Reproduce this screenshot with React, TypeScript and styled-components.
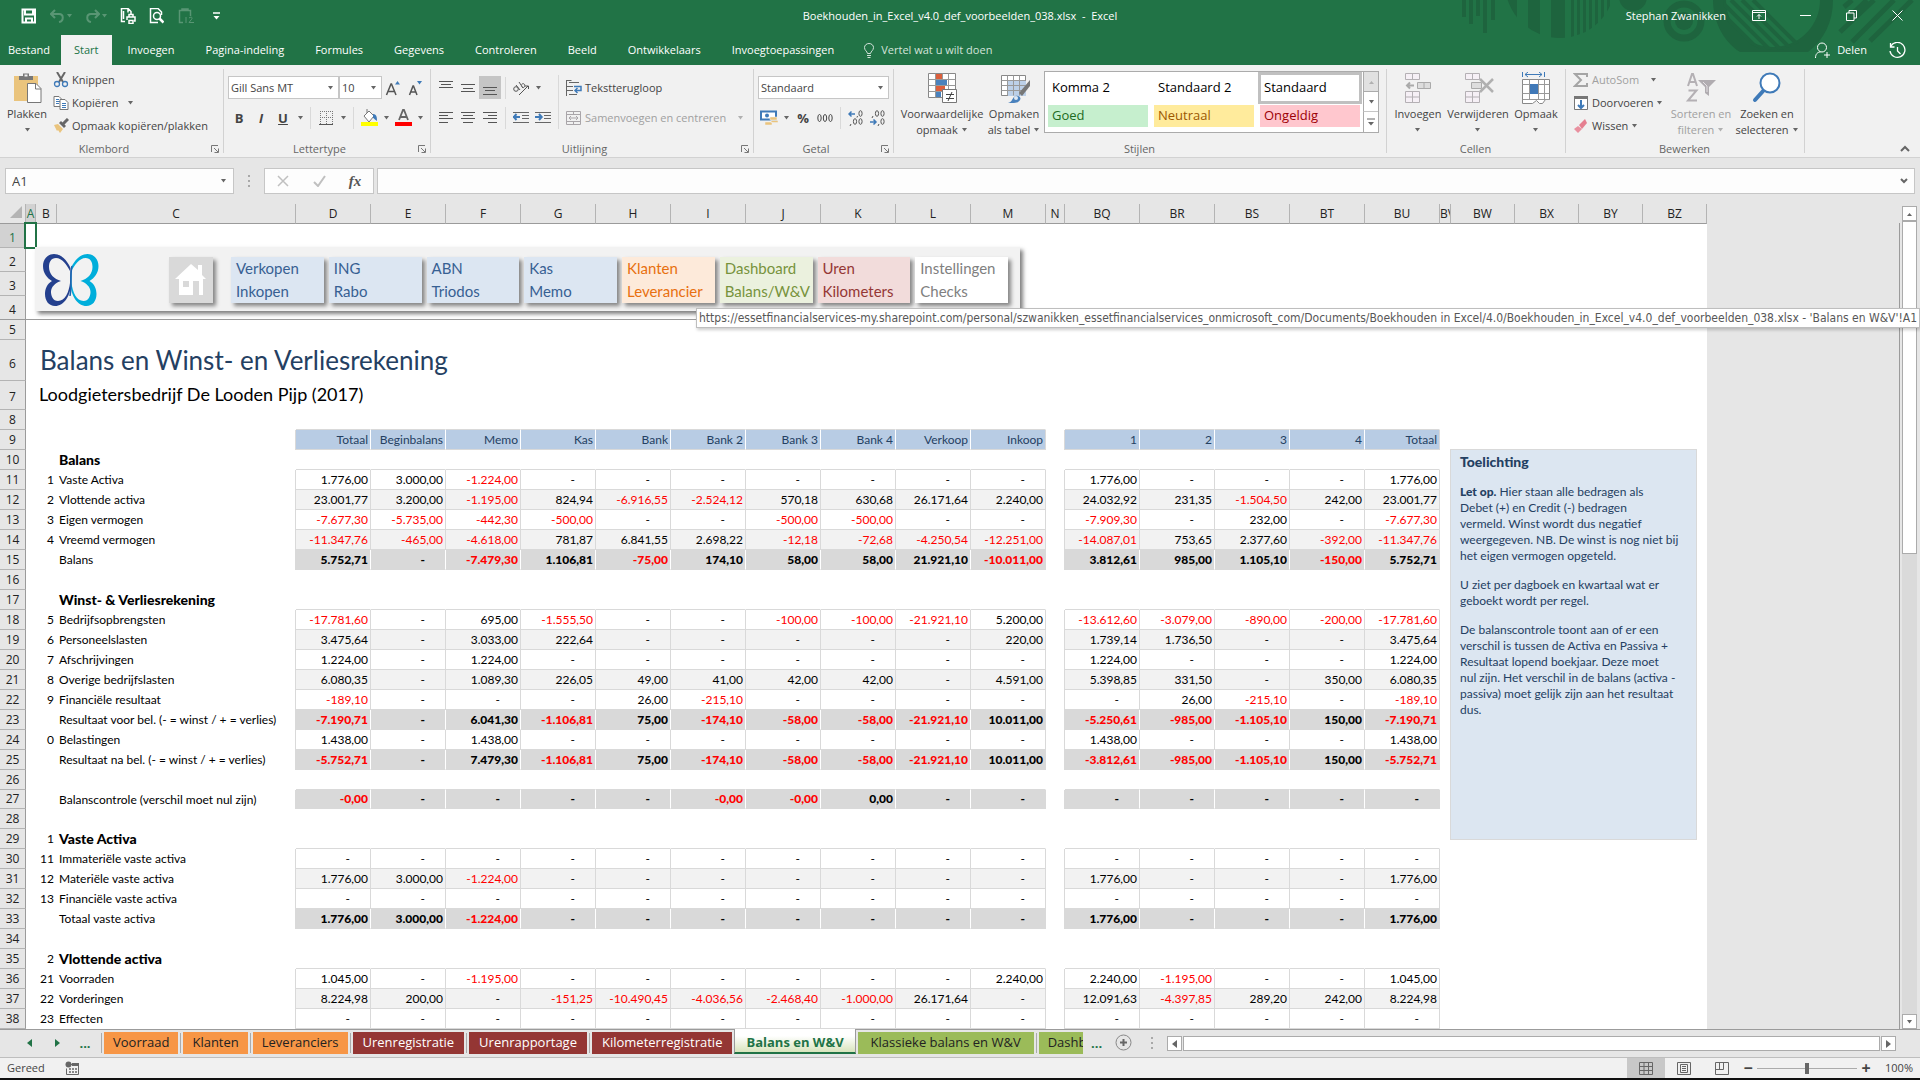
import React, { Fragment, ReactNode } from "react";
import styled, { createGlobalStyle, css } from "styled-components";

const ui = `"Open Sans", "Noto Sans", sans-serif`;
const gill = `Lato, "Open Sans", sans-serif`;
const green = "#217346";
const line = "#d9d9d9";

const Global = createGlobalStyle`
  * { box-sizing: border-box; }
  html, body { margin: 0; height: 100%; }
  body { font: 11px/16px ${ui}; color: #444; background: #e6e6e6; overflow: hidden; }
  button, input, select { font: inherit; color: inherit; }
  button { border: 0; padding: 0; background: none; cursor: default; }
  svg { display: block; flex: none; }
`;

const Window = styled.div`
  display: flex;
  flex-direction: column;
  height: 100vh;
  min-width: 0;
`;

/* ---------- Title bar ---------- */

const Header = styled.header`
  position: relative;
  background: ${green};
  color: #fff;
`;
const Pattern = styled.svg`
  position: absolute;
  top: 0;
  right: 0;
`;
const TitleBar = styled.div`
  position: relative;
  display: grid;
  grid-template-columns: 1fr auto 1fr;
  align-items: center;
  height: 35px;
  padding-bottom: 4px;
`;
const QuickAccess = styled.div`
  display: flex;
  align-items: center;
  padding-left: 15px;
`;
const QuickButton = styled.button<{ $dim?: boolean }>`
  display: flex;
  align-items: center;
  justify-content: space-between;
  width: ${(p) => (p.$dim ? 35 : 29)}px;
  height: 24px;
  padding: 0 6px;
  opacity: ${(p) => (p.$dim ? 0.25 : 1)};
`;
const DocTitle = styled.h1`
  margin: 0;
  font: inherit;
  white-space: pre;
`;
const WindowControls = styled.div`
  display: flex;
  align-items: center;
  justify-content: flex-end;
`;
const WindowButton = styled.button`
  display: flex;
  justify-content: center;
  width: 46px;
`;
const UserName = styled.span`
  margin-right: 10px;
`;
const TabRow = styled.nav`
  position: relative;
  display: flex;
  gap: 1px;
  height: 30px;
  padding-right: 14px;
`;
const RibbonTab = styled.button<{ $active?: boolean; $file?: boolean }>`
  padding: 0 ${(p) => (p.$file ? 10 : p.$active ? 13 : 15)}px;
  padding-left: ${(p) => (p.$file ? 8 : p.$active ? 13 : 15)}px;
  background: ${(p) => (p.$active ? "#f1f1f1" : "transparent")};
  color: ${(p) => (p.$active ? green : "#fff")};
`;
const TellMe = styled.button`
  display: flex;
  align-items: center;
  gap: 7px;
  margin-left: 14px;
  color: #d3e3da;
`;
const TabActions = styled.div`
  display: flex;
  align-items: center;
  gap: 22px;
  margin-left: auto;
`;
const TabAction = styled.button`
  display: flex;
  align-items: center;
  gap: 7px;
`;

/* ---------- Ribbon ---------- */

const Ribbon = styled.section`
  display: flex;
  height: 93px;
  background: #f1f1f1;
  border-bottom: 1px solid #d2d2d2;
`;
const Group = styled.div<{ $w: number }>`
  display: flex;
  flex-direction: column;
  flex: none;
  width: ${(p) => p.$w}px;
  margin: 4px 0;
  border-right: 1px solid #d2d2d2;
`;
const GroupBody = styled.div`
  display: flex;
  flex: 1;
  padding-left: 4px;
`;
const GroupFoot = styled.div`
  display: flex;
  align-items: center;
  height: 16px;
  margin-bottom: -4px;
  padding-right: 1px;
  color: #666;
`;
const GroupName = styled.span`
  flex: 1;
  text-align: center;
  line-height: 12px;
`;
const Launcher = styled.button`
  width: 14px;
  display: grid;
  place-items: center;
`;
const BigButton = styled.button<{ $w: number; $off?: boolean }>`
  display: flex;
  flex-direction: column;
  align-items: center;
  width: ${(p) => p.$w}px;
  padding-top: 3px;
  gap: 2px;
  white-space: nowrap;
  color: ${(p) => (p.$off ? "#a0a0a0" : "#444")};
`;
const BigText = styled.span`
  display: flex;
  flex-direction: column;
  align-items: center;
  height: 32px;
`;
const BigLine = styled.span`
  display: flex;
  align-items: center;
  gap: 3px;
  height: 16px;
`;
const Stack = styled.div<{ $w?: number }>`
  display: flex;
  flex-direction: column;
  margin-top: -1px;
  width: ${(p) => (p.$w ? p.$w + "px" : "auto")};
`;
const SmallButton = styled.button<{ $off?: boolean; $gap?: number }>`
  display: flex;
  align-items: center;
  gap: 3px;
  height: 23px;
  padding-left: 3px;
  white-space: nowrap;
  color: ${(p) => (p.$off ? "#a0a0a0" : "#444")};
  & > svg:last-child:not(:first-child) { margin-left: ${(p) => p.$gap || 0}px; }
`;
const TwoRows = styled.div`
  display: flex;
  flex-direction: column;
  gap: 7px;
  padding-top: 7px;
`;
const ToolRow = styled.div`
  display: flex;
  align-items: center;
  height: 23px;
`;
const Tool = styled.button<{ $on?: boolean }>`
  display: grid;
  place-items: center;
  width: 22px;
  height: 23px;
  background: ${(p) => (p.$on ? "#c5c5c5" : "transparent")};
  font-size: 13px;
`;
const CaretButton = styled.button`
  display: grid;
  place-items: center;
  width: 12px;
  height: 23px;
`;
const Divider = styled.span<{ $tall?: boolean }>`
  width: 1px;
  height: ${(p) => (p.$tall ? 54 : 22)}px;
  margin: ${(p) => (p.$tall ? "6px" : "0")} 4px 0;
  background: ${line};
`;
const SelectWrap = styled.label<{ $w: number }>`
  display: grid;
  align-items: center;
  width: ${(p) => p.$w}px;
  height: 23px;
  & > * { grid-area: 1 / 1; }
  & > svg { justify-self: end; margin-right: 5px; pointer-events: none; }
`;
const Select = styled.select`
  appearance: none;
  width: 100%;
  height: 23px;
  padding: 0 2px;
  border: 1px solid #c6c6c6;
  border-radius: 0;
  background: #fff;
`;
const Gallery = styled.div`
  display: flex;
  width: 335px;
  height: 62px;
  margin: 2px 0 0 2px;
  border: 1px solid #ababab;
  background: #fff;
`;
const GalleryGrid = styled.div`
  display: grid;
  grid-template-columns: repeat(3, 100px);
  grid-template-rows: 28px 22px;
  gap: 3px 6px;
  flex: 1;
  padding: 2px 3px;
`;
const StyleCell = styled.button<{ $bg?: string; $fg?: string; $sel?: boolean }>`
  padding: 0 0 2px 4px;
  text-align: left;
  font-size: 13px;
  color: ${(p) => p.$fg || "#000"};
  background: ${(p) => p.$bg || "#fff"};
  ${(p) => p.$sel && css`
    outline: 3px solid #c0c0c0;
    outline-offset: -1px;
  `}
`;
const GalleryScroll = styled.div`
  display: grid;
  grid-template-rows: repeat(3, 1fr);
  width: 15px;
`;
const ScrollStep = styled.button<{ $off?: boolean }>`
  display: grid;
  place-items: center;
  border-left: 1px solid #ababab;
  border-bottom: 1px solid ${(p) => (p.$off ? "#ababab" : "#c6c6c6")};
  background: ${(p) => (p.$off ? "#e1e1e1" : "#fff")};
  &:last-child { border-bottom: 0; }
`;
const RibbonEnd = styled.div`
  display: flex;
  flex: 1;
  align-items: flex-end;
  justify-content: flex-end;
  padding: 0 10px 5px;
`;

/* ---------- Formula bar ---------- */

const FormulaBar = styled.div`
  display: flex;
  align-items: center;
  height: 46px;
  padding: 0 5px;
`;
const Box = styled.div<{ $w?: number }>`
  display: flex;
  align-items: center;
  flex: ${(p) => (p.$w ? "none" : 1)};
  width: ${(p) => (p.$w ? p.$w + "px" : "auto")};
  height: 26px;
  border: 1px solid #c6c6c6;
  background: #fdfdfd;
  padding-right: 6px;
`;
const BoxInput = styled.input`
  flex: 1;
  min-width: 0;
  border: 0;
  padding: 0 6px;
  font-size: 13px;
  background: transparent;
`;
const Grip = styled.span`
  width: 30px;
  height: 25px;
  display: grid;
  justify-items: center;
  align-content: center;
  gap: 3px;
  & > i { width: 2px; height: 2px; background: #a8a8a8; }
`;
const FxButtons = styled.div`
  display: flex;
  width: 110px;
  height: 26px;
  margin-right: 3px;
  border: 1px solid #c6c6c6;
  background: #fdfdfd;
`;
const FxButton = styled.button`
  display: grid;
  place-items: center;
  flex: 1;
  font: italic bold 15px/20px "Liberation Serif", serif;
  color: #555;
`;

/* ---------- Sheet ---------- */

const Workspace = styled.main`
  position: relative;
  display: flex;
  flex: 1;
  min-height: 0;
`;
const Pane = styled.div`
  position: relative;
  flex: 1;
  min-width: 0;
  overflow: hidden;
`;
const Grid = styled.table`
  table-layout: fixed;
  width: 1707px;
  border-collapse: separate;
  border-spacing: 0;
  font: 12px/16px ${gill};
  color: #000;
  background: #fff;
`;
const ColHead = styled.th<{ $sel?: boolean }>`
  height: 20px;
  padding: 0;
  overflow: hidden;
  font: 12px/16px ${ui};
  color: ${(p) => (p.$sel ? green : "#222")};
  background: ${(p) => (p.$sel ? "#d2d2d2" : "#e6e6e6")};
  border-right: 1px solid #b4b4b4;
  border-bottom: 1px solid #9b9b9b;
`;
const Corner = styled.th`
  padding: 0 3px 3px 0;
  background: #e6e6e6;
  border-bottom: 1px solid #9b9b9b;
  border-right: 1px solid #b4b4b4;
  & > svg { margin-left: auto; }
`;
const Row = styled.tr<{ $h: number }>`
  height: ${(p) => p.$h}px;
`;
const RowHead = styled.th<{ $sel?: boolean; $frozen?: boolean; $drop?: number }>`
  padding: ${(p) => p.$drop || 0}px 0 0;
  font: 12px/16px ${ui};
  color: ${(p) => (p.$sel ? green : "#222")};
  background: ${(p) => (p.$sel ? "#d2d2d2" : "#e6e6e6")};
  border-right: 1px solid #9b9b9b;
  border-bottom: 1px solid ${(p) => (p.$frozen ? "#9b9b9b" : "#b4b4b4")};
`;
type Kind = "plain" | "alt" | "total" | "head" | "above" | "blank";
const fills: Record<Kind, string> = {
  plain: "#fff", alt: "#f2f2f2", total: "#d9d9d9", head: "#b8cce4", above: "#fff", blank: "#fff",
};
const Cell = styled.td<{ $kind: Kind; $last?: boolean; $dash?: boolean; $neg?: boolean }>`
  padding: 0 ${(p) => (p.$dash ? 20 : 2)}px 0 0;
  text-align: right;
  white-space: nowrap;
  background: ${(p) => fills[p.$kind]};
  color: ${(p) => (p.$neg ? "#f00" : p.$kind === "head" ? "#244062" : "#000")};
  font-weight: ${(p) => (p.$kind === "total" ? 900 : 400)};
  border-bottom: 1px solid ${(p) => (p.$kind === "blank" ? "#fff" : line)};
  border-right: 1px solid ${(p) =>
    p.$kind === "blank" || p.$kind === "above" ? "#fff"
      : p.$last || p.$kind === "plain" || p.$kind === "alt" ? line : "#fff"};
`;
const Label = styled.td<{ $bold?: boolean; $edge?: boolean }>`
  padding: 0 0 0 2px;
  white-space: nowrap;
  font-weight: ${(p) => (p.$bold ? 900 : 400)};
  font-size: ${(p) => (p.$bold ? 14 : 12)}px;
  border-right: 1px solid ${(p) => (p.$edge ? line : "transparent")};
`;
const Code = styled.td`
  padding: 0 3px 0 0;
  text-align: right;
`;
const Spacer = styled.td<{ $edge?: boolean; $frozen?: boolean }>`
  padding: 0;
  border-right: 1px solid ${(p) => (p.$edge ? line : "transparent")};
  border-bottom: ${(p) => (p.$frozen ? "1px solid #9b9b9b" : "0")};
`;
const Selected = styled.td`
  position: relative;
  padding: 0;
  &::after {
    content: "";
    position: absolute;
    inset: -2px -1px -1px -2px;
    border: 2px solid ${green};
  }
`;
const Heading = styled.td`
  padding: 0 0 0 4px;
  font-size: 26px;
  line-height: 40px;
  vertical-align: top;
  color: #244062;
`;
const SubHeading = styled.td`
  padding: 0 0 0 3px;
  font-size: 18px;
  line-height: 26px;
  vertical-align: top;
`;

const NavPanel = styled.nav`
  position: absolute;
  left: 35px;
  top: 43px;
  display: flex;
  width: 985px;
  height: 64px;
  padding: 7px 12px 8px 8px;
  background: #f2f2f2;
  box-shadow: 3px 3px 4px rgba(0, 0, 0, 0.5);
`;
const HomeLink = styled.a`
  display: grid;
  place-items: center;
  width: 44px;
  height: 46px;
  margin: 3px 18px 0 70px;
  background: ${line};
  box-shadow: 3px 3px 4px rgba(0, 0, 0, 0.45);
`;
const NavCards = styled.div`
  display: flex;
  flex: 1;
  gap: 5px;
  margin-top: 3px;
`;
const NavCard = styled.div<{ $bg: string; $fg: string }>`
  display: flex;
  flex: 1 1 0;
  min-width: 0;
  flex-direction: column;
  height: 46px;
  background: ${(p) => p.$bg};
  box-shadow: 3px 3px 4px rgba(0, 0, 0, 0.45);
  & > a {
    padding-left: 5px;
    font: 15px/23px ${gill};
    color: ${(p) => p.$fg};
    text-decoration: none;
  }
`;
const Note = styled.aside`
  position: absolute;
  left: 1450px;
  top: 245px;
  width: 247px;
  height: 391px;
  padding: 4px 9px;
  border: 1px solid ${line};
  background: #dce6f1;
  color: #244062;
  font: 12px/16px ${gill};
  white-space: nowrap;
  & > h2 { margin: 0; font: 900 14px/16px ${gill}; }
  & > p { margin: 14px 0 0; }
  & > p + p { margin-top: 13px; }
  & b { font-weight: 900; }
`;
const Tooltip = styled.div`
  position: absolute;
  right: 0;
  top: 104px;
  height: 20px;
  padding: 0 2px;
  border: 1px solid #bebebe;
  background: #fff;
  color: #575757;
  font: 12px/18px "DejaVu Sans Condensed", "DejaVu Sans", sans-serif;
  white-space: nowrap;
  box-shadow: 1px 2px 3px rgba(0, 0, 0, 0.2);
`;
const VScroll = styled.div`
  display: flex;
  flex-direction: column;
  align-items: flex-start;
  width: 21px;
  padding-top: 2px;
  padding-left: 3px;
`;
const PaneEdge = styled.div`
  width: 1px;
  margin-top: 19px;
  margin-right: -1px;
  background: #9b9b9b;
`;
const Arrow = styled.button`
  display: grid;
  place-items: center;
  flex: none;
  width: 15px;
  height: 15px;
  border: 1px solid #ababab;
  background: #fff;
`;
const VTrack = styled.div`
  flex: 1;
  width: 15px;
  background: #dadada;
`;
const VThumb = styled.div`
  height: 42%;
  border: 1px solid #ababab;
  background: #fff;
`;

/* ---------- Sheet tabs ---------- */

const SheetBar = styled.div`
  display: flex;
  align-items: flex-start;
  height: 28px;
  padding: 0 24px 0 15px;
  border-top: 1px solid #9b9b9b;
  font-size: 13px;
`;
const SheetNav = styled.button`
  display: grid;
  place-items: center;
  width: 28px;
  height: 25px;
  font-weight: 700;
  color: ${green};
`;
const SheetTabs = styled.div`
  display: flex;
  min-width: 0;
`;
const TabRule = styled.i`
  width: 1px;
  height: 20px;
  margin: 3px 2px 0;
  background: #ababab;
`;
const SheetTab = styled.button<{ $bg: string; $fg: string; $pad: number; $cut?: boolean }>`
  height: 22px;
  margin-top: 2px;
  padding: 0 ${(p) => p.$pad}px 2px;
  background: ${(p) => p.$bg};
  color: ${(p) => p.$fg};
  line-height: 20px;
  white-space: nowrap;
  ${(p) => p.$cut && css`
    width: 44px;
    overflow: hidden;
    text-align: left;
  `}
`;
const ActiveTab = styled.button`
  height: 25px;
  margin: -1px 2px 0;
  padding: 2px 11px 0;
  font-weight: 700;
  line-height: 22px;
  color: ${green};
  background: linear-gradient(#fff 30%, #d8e4bc);
  border: 1px solid #9b9b9b;
  border-width: 0 1px 2px;
  border-bottom-color: ${green};
`;
const AddSheet = styled.button`
  display: grid;
  place-items: center;
  width: 26px;
  height: 25px;
`;
const HScroll = styled.div`
  display: flex;
  flex: 1;
  margin-top: 6px;
  gap: 1px;
`;
const HThumb = styled.div`
  flex: 1;
  height: 15px;
  border: 1px solid #ababab;
  background: #fff;
`;

/* ---------- Status bar ---------- */

const StatusBar = styled.footer`
  display: flex;
  align-items: center;
  height: 23px;
  padding: 0 7px;
  border-top: 1px solid #bebebe;
  border-bottom: 2px solid #101010;
  background: #f1f1f1;
`;
const MacroButton = styled.button`
  margin-left: 20px;
`;
const Views = styled.div`
  display: flex;
  margin-left: auto;
`;
const ViewButton = styled.button<{ $on?: boolean }>`
  display: grid;
  place-items: center;
  width: 38px;
  height: 20px;
  background: ${(p) => (p.$on ? "#c8c8c8" : "transparent")};
`;
const ZoomStep = styled.button`
  width: 14px;
  font-size: 16px;
  font-weight: 700;
  line-height: 18px;
`;
const Zoom = styled.input`
  appearance: none;
  width: 100px;
  height: 14px;
  margin: 0 2px;
  background: linear-gradient(#ababab, #ababab) center / 100% 1px no-repeat;
  &::-webkit-slider-thumb {
    appearance: none;
    width: 4px;
    height: 11px;
    background: #666;
  }
`;
const ZoomValue = styled.span`
  width: 40px;
  text-align: right;
`;

/* ---------- Icons ---------- */

const Ico = ({ w = 16, h = 16, children }: { w?: number; h?: number; children: ReactNode }) => (
  <svg width={w} height={h} viewBox={`0 0 ${w} ${h}`} fill="none" stroke="currentColor" aria-hidden="true">{children}</svg>
);
const Caret = ({ c = "#666", up }: { c?: string; up?: boolean }) => (
  <Ico w={7} h={4}><path d={up ? "M1 4h5L3.5 1z" : "M1 0h5L3.5 3.5z"} fill={c} stroke="none" /></Ico>
);
const Lines = ({ d }: { d: string }) => <Ico><path d={d} stroke="#555" /></Ico>;

const PasteIcon = () => (
  <Ico w={30} h={32}>
    <path d="M2 4h24v25H2z" fill="#eac47d" stroke="none" />
    <path d="M7 8V4h4V1.500h6V4h4v4z" fill="#777" stroke="none" />
    <path d="M12.500 2.500h3v2h-3z" fill="#f1f1f1" stroke="none" />
    <path d="M15.500 11.500h8.500l5 5v14H15.500z" fill="#fff" stroke="#777" />
    <path d="M23.500 11.500v5.500h5.500" stroke="#777" />
  </Ico>
);
const CutIcon = () => (
  <Ico>
    <path d="M4 0l6 10M12 0L6 10" stroke="#666" strokeWidth="2" />
    <circle cx="4" cy="12" r="2.500" stroke="#3f7ab8" strokeWidth="1.300" />
    <circle cx="12" cy="12" r="2.500" stroke="#3f7ab8" strokeWidth="1.300" />
  </Ico>
);
const CopyIcon = () => (
  <Ico>
    <path d="M1 1.500h5l3 3v7H1z" fill="#fff" stroke="#777" />
    <path d="M3 4.500h3M3 6.500h4M3 8.500h3" stroke="#3f7ab8" />
    <path d="M7 4.500h5l3 3v7H7z" fill="#fff" stroke="#777" />
    <path d="M9 8.500h4M9 10.500h4M9 12.500h4" stroke="#3f7ab8" />
  </Ico>
);
const BrushIcon = () => (
  <Ico>
    <path d="M1 7l4-1 5 5-3 4-2-3-1 1z" fill="#eac47d" stroke="none" />
    <path d="M6 5l2-2 5 5-2 2z" fill="#666" stroke="none" />
    <path d="M10 6l5-5" stroke="#666" strokeWidth="3" />
  </Ico>
);
const CondIcon = () => (
  <Ico w={32} h={32}>
    <path d="M2.500 1.500h27v24h-27z" fill="#fff" stroke="#888" />
    <path d="M10 2h6v5h-6zM10 14h9v5h-9z" fill="#dc5f3c" stroke="none" />
    <path d="M10 8h11v5H10zM10 20h5v5h-5z" fill="#4a82bd" stroke="none" />
    <path d="M2.500 7.500h27M2.500 13.500h27M2.500 19.500h27M9.500 1.500v24M16.500 1.500v6M22.500 1.500v24" stroke="#999" />
    <path d="M16.500 17.500h14v13h-14z" fill="#fff" stroke="#777" />
    <path d="M20 22.500h8M20 26.500h8M26 20l-4 9" stroke="#444" />
  </Ico>
);
const TableIcon = () => (
  <Ico w={32} h={32}>
    <path d="M3.500 3.500h24v20h-24z" fill="#fff" stroke="#888" />
    <path d="M10 9h18v15H10z" fill="#bcd0e8" stroke="none" />
    <path d="M3.500 8.500h24M3.500 13.500h24M3.500 18.500h24M9.500 3.500v20M15.500 3.500v20M21.500 3.500v20" stroke="#999" />
    <path d="M32 8v6l-8 10-3-3z" fill="#777" stroke="none" />
    <path d="M10 31c4-1 4-4 6-6 3-3 8 0 6 3-2 4-8 3-12 3z" fill="#4a82bd" stroke="none" />
    <circle cx="18" cy="26" r="2" fill="#dfe9f4" stroke="none" />
  </Ico>
);
const InsertIcon = () => (
  <Ico w={32} h={32}>
    <path d="M3.500 1.500h14v6h-14zM10.500 1.500v6M3.500 19.500h14v11h-14zM3.500 25h14M10.500 19.500v11" fill="#f6f0f6" stroke="#b4b0b4" />
    <path d="M15.500 10.500h13v6h-13zM22 10.500v6" fill="#ddd" stroke="#aaa" />
    <path d="M5 13.500h7M8 10.500l-3 3 3 3" stroke="#aaa" strokeWidth="2" />
  </Ico>
);
const DeleteIcon = () => (
  <Ico w={32} h={32}>
    <path d="M3.500 1.500h14v6h-14zM10.500 1.500v6M3.500 19.500h14v11h-14zM3.500 25h14M10.500 19.500v11" fill="#f6f0f6" stroke="#b4b0b4" />
    <path d="M9.500 10.500h10v6h-10z" fill="#ddd" stroke="#aaa" />
    <path d="M18 7l13 13M31 7L18 20" stroke="#b0b0b0" strokeWidth="2.500" />
  </Ico>
);
const FormatIcon = () => (
  <Ico w={32} h={32}>
    <path d="M2.500 0v5M24.500 0v5M5 2.500h17M8 0L5 2.500 8 5M19 0l3 2.500L19 5" stroke="#3f7ab8" />
    <path d="M2.500 7.500h27v20h-4l-3 4h-3l-3-3-4 3h-10z" fill="#fff" stroke="#888" />
    <path d="M2.500 12.500h27M2.500 21.500h27M2.500 27.500h27M9.500 7.500v20M18.500 7.500v20M24.500 7.500v20" stroke="#999" />
    <path d="M10 12h8v10h-8z" fill="#4079b8" stroke="none" />
  </Ico>
);
const SortIcon = () => (
  <Ico w={32} h={32}>
    <path d="M3 14L7 2h1l4 12M4.500 10h6M3.500 18.500h8L3 28.500h9" stroke="#b4b0b4" strokeWidth="2" />
    <path d="M13 8h18l-7 7v9l-4-3v-6z" fill="#b0acb0" stroke="none" />
    <path d="M18 10l4 4v6" stroke="#e4e0e4" />
  </Ico>
);
const FindIcon = () => (
  <Ico w={32} h={32}>
    <path d="M13 18L4 28" stroke="#3f7ab8" strokeWidth="4" strokeLinecap="round" />
    <circle cx="19" cy="11" r="9.500" fill="#fff" stroke="#3f7ab8" strokeWidth="2" />
  </Ico>
);
const HeaderPattern = () => (
  <Pattern width="480" height="65" viewBox="0 0 480 65" aria-hidden="true">
    <defs>
      <clipPath id="disc"><circle cx="120" cy="-17" r="55" /></clipPath>
      <clipPath id="inner"><circle cx="333" cy="0" r="50" /></clipPath>
    </defs>
    <g fill="#1e643e">
      <path d="M22 0h4v17h-4zM29 0h4v24h-4zM36 0h4v16h-4zM43 0h4v33h-4zM51 0h4v20h-4z" />
      <path clipPath="url(#disc)" d="M66 0h11v40H66zM88 0h12v40H88zM111 0h14v40h-14zM131 0h3v40h-3zM137 0h3v40h-3zM143 0h3v40h-3zM149 0h3v40h-3zM155 0h3v40h-3zM161 0h3v40h-3zM167 0h3v40h-3z" />
      <circle cx="193" cy="-3" r="14" />
      <circle cx="244" cy="21" r="9" />
      <path d="M273 0c0 18 8 40 27 52h68c16-12 25-30 25-52h-13c0 26-21 47-47 47S286 26 286 0z" />
    </g>
    <circle cx="244" cy="21" r="17" fill="none" stroke="#1e643e" strokeWidth="7" />
    <g stroke="#1e643e" strokeWidth="4" clipPath="url(#inner)">
      <path d="M280 0l60 60M291 0l60 60M302 0l60 60M269 0l60 60M313 0l60 60" />
    </g>
    <path d="M404 7l8-7M409 17l18-17M400 32l34-32M412 42l42-42M430 41l42-41" stroke="#1e643e" strokeWidth="5" />
  </Pattern>
);
const wing = "M27.500 14C24 6 18 0 11 0C4 0 0 6 0 12C0 19 4 24 9 27C4 30 2 35 2 40C2 47 6 52 12 52C21 52 28 42 28 28ZM27 17C27 21 27 25 27 29C26 38 22 47 15 47C10 47 8 42 8 38C8 33 12 29 18 27C11 25 6 20 6 13C6 8 8 4 13 4C19 4 24 11 27 17Z";
const Logo = () => (
  <svg width="56" height="53" viewBox="0 0 56 53" role="img" aria-label="Logo">
    <path d={wing} fill="#24408e" fillRule="evenodd" />
    <path d={wing} fill="#00aedb" fillRule="evenodd" transform="translate(55.500 0) scale(-1 1)" />
    <path d="M29 12C27 20 29 30 27 42" stroke="#1c62b0" strokeWidth="1.500" fill="none" />
  </svg>
);
const HomeIcon = () => (
  <Ico w={34} h={34}>
    <path d="M17 1L1 16h4v16h14V18h6v14h4V16h3l-4-4V2h-4v5zM9 18h6v6H9z" fill="#fff" fillRule="evenodd" stroke="none" />
  </Ico>
);

/* ---------- Data ---------- */

const columns: [string, number][] = [
  ["A", 10], ["B", 21], ["C", 239], ["D", 75], ["E", 75], ["F", 75], ["G", 75], ["H", 75], ["I", 75], ["J", 75],
  ["K", 75], ["L", 75], ["M", 75], ["N", 19], ["BQ", 75], ["BR", 75], ["BS", 75], ["BT", 75], ["BU", 75],
  ["BV", 11], ["BW", 64], ["BX", 64], ["BY", 64], ["BZ", 64],
];

type RowData = { n: number; kind: Kind; code?: string; label?: string; bold?: boolean; v?: string };
const rows: RowData[] = [
  { n: 8, kind: "above" },
  { n: 9, kind: "head", v: "Totaal|Beginbalans|Memo|Kas|Bank|Bank 2|Bank 3|Bank 4|Verkoop|Inkoop|1|2|3|4|Totaal" },
  { n: 10, kind: "above", label: "Balans", bold: true },
  { n: 11, kind: "plain", code: "1", label: "Vaste Activa", v: "1.776,00|3.000,00|-1.224,00|-|-|-|-|-|-|-|1.776,00|-|-|-|1.776,00" },
  { n: 12, kind: "alt", code: "2", label: "Vlottende activa", v: "23.001,77|3.200,00|-1.195,00|824,94|-6.916,55|-2.524,12|570,18|630,68|26.171,64|2.240,00|24.032,92|231,35|-1.504,50|242,00|23.001,77" },
  { n: 13, kind: "plain", code: "3", label: "Eigen vermogen", v: "-7.677,30|-5.735,00|-442,30|-500,00|-|-|-500,00|-500,00|-|-|-7.909,30|-|232,00|-|-7.677,30" },
  { n: 14, kind: "alt", code: "4", label: "Vreemd vermogen", v: "-11.347,76|-465,00|-4.618,00|781,87|6.841,55|2.698,22|-12,18|-72,68|-4.250,54|-12.251,00|-14.087,01|753,65|2.377,60|-392,00|-11.347,76" },
  { n: 15, kind: "total", label: "Balans", v: "5.752,71|-|-7.479,30|1.106,81|-75,00|174,10|58,00|58,00|21.921,10|-10.011,00|3.812,61|985,00|1.105,10|-150,00|5.752,71" },
  { n: 16, kind: "blank" },
  { n: 17, kind: "above", label: "Winst- & Verliesrekening", bold: true },
  { n: 18, kind: "plain", code: "5", label: "Bedrijfsopbrengsten", v: "-17.781,60|-|695,00|-1.555,50|-|-|-100,00|-100,00|-21.921,10|5.200,00|-13.612,60|-3.079,00|-890,00|-200,00|-17.781,60" },
  { n: 19, kind: "alt", code: "6", label: "Personeelslasten", v: "3.475,64|-|3.033,00|222,64|-|-|-|-|-|220,00|1.739,14|1.736,50|-|-|3.475,64" },
  { n: 20, kind: "plain", code: "7", label: "Afschrijvingen", v: "1.224,00|-|1.224,00|-|-|-|-|-|-|-|1.224,00|-|-|-|1.224,00" },
  { n: 21, kind: "alt", code: "8", label: "Overige bedrijfslasten", v: "6.080,35|-|1.089,30|226,05|49,00|41,00|42,00|42,00|-|4.591,00|5.398,85|331,50|-|350,00|6.080,35" },
  { n: 22, kind: "plain", code: "9", label: "Financiële resultaat", v: "-189,10|-|-|-|26,00|-215,10|-|-|-|-|-|26,00|-215,10|-|-189,10" },
  { n: 23, kind: "total", label: "Resultaat voor bel. (- = winst / + = verlies)", v: "-7.190,71|-|6.041,30|-1.106,81|75,00|-174,10|-58,00|-58,00|-21.921,10|10.011,00|-5.250,61|-985,00|-1.105,10|150,00|-7.190,71" },
  { n: 24, kind: "plain", code: "0", label: "Belastingen", v: "1.438,00|-|1.438,00|-|-|-|-|-|-|-|1.438,00|-|-|-|1.438,00" },
  { n: 25, kind: "total", label: "Resultaat na bel. (- = winst / + = verlies)", v: "-5.752,71|-|7.479,30|-1.106,81|75,00|-174,10|-58,00|-58,00|-21.921,10|10.011,00|-3.812,61|-985,00|-1.105,10|150,00|-5.752,71" },
  { n: 26, kind: "above" },
  { n: 27, kind: "total", label: "Balanscontrole (verschil moet nul zijn)", v: "-0,00|-|-|-|-|-0,00|-0,00|0,00|-|-|-|-|-|-|-" },
  { n: 28, kind: "blank" },
  { n: 29, kind: "above", code: "1", label: "Vaste Activa", bold: true },
  { n: 30, kind: "plain", code: "11", label: "Immateriële vaste activa", v: "-|-|-|-|-|-|-|-|-|-|-|-|-|-|-" },
  { n: 31, kind: "alt", code: "12", label: "Materiële vaste activa", v: "1.776,00|3.000,00|-1.224,00|-|-|-|-|-|-|-|1.776,00|-|-|-|1.776,00" },
  { n: 32, kind: "plain", code: "13", label: "Financiële vaste activa", v: "-|-|-|-|-|-|-|-|-|-|-|-|-|-|-" },
  { n: 33, kind: "total", label: "Totaal vaste activa", v: "1.776,00|3.000,00|-1.224,00|-|-|-|-|-|-|-|1.776,00|-|-|-|1.776,00" },
  { n: 34, kind: "blank" },
  { n: 35, kind: "above", code: "2", label: "Vlottende activa", bold: true },
  { n: 36, kind: "plain", code: "21", label: "Voorraden", v: "1.045,00|-|-1.195,00|-|-|-|-|-|-|2.240,00|2.240,00|-1.195,00|-|-|1.045,00" },
  { n: 37, kind: "alt", code: "22", label: "Vorderingen", v: "8.224,98|200,00|-|-151,25|-10.490,45|-4.036,56|-2.468,40|-1.000,00|26.171,64|-|12.091,63|-4.397,85|289,20|242,00|8.224,98" },
  { n: 38, kind: "plain", code: "23", label: "Effecten", v: "-|-|-|-|-|-|-|-|-|-|-|-|-|-|-" },
];

const cards: [string, string, string, string][] = [
  ["Verkopen", "Inkopen", "#dce6f2", "#376092"], ["ING", "Rabo", "#dce6f2", "#376092"],
  ["ABN", "Triodos", "#dce6f2", "#376092"], ["Kas", "Memo", "#dce6f2", "#376092"],
  ["Klanten", "Leverancier", "#fdeada", "#e8700f"], ["Dashboard", "Balans/W&V", "#ebf1de", "#77933c"],
  ["Uren", "Kilometers", "#f2dcdb", "#953735"], ["Instellingen", "Checks", "#ffffff", "#808080"],
];
const ribbonTabs = ["Invoegen", "Pagina-indeling", "Formules", "Gegevens", "Controleren", "Beeld", "Ontwikkelaars", "Invoegtoepassingen"];
const leftTabs: [string, string, string, number][] = [
  ["Voorraad", "#f79646", "#222", 9], ["Klanten", "#f79646", "#222", 9], ["Leveranciers", "#f79646", "#222", 9],
  ["Urenregistratie", "#943634", "#fff", 10], ["Urenrapportage", "#943634", "#fff", 10], ["Kilometerregistratie", "#943634", "#fff", 10],
];

const Big = ({ w, icon, a, b, off }: { w: number; icon: ReactNode; a: string; b?: string; off?: boolean }) => (
  <BigButton $w={w} $off={off}>
    {icon}
    <BigText>
      <BigLine>{a}</BigLine>
      <BigLine>{b}<Caret c={off ? "#b0b0b0" : "#666"} /></BigLine>
    </BigText>
  </BigButton>
);
const Foot = ({ name, open = true }: { name: string; open?: boolean }) => (
  <GroupFoot>
    <GroupName>{name}</GroupName>
    {open && (
      <Launcher aria-label={`${name} instellingen`}>
        <Ico w={8} h={8}><path d="M.5 7V.5H7M3 3l4 4M7.500 3.500v4h-4" stroke="#777" /></Ico>
      </Launcher>
    )}
  </GroupFoot>
);
const Drop = ({ w, value, name }: { w: number; value: string; name: string }) => (
  <SelectWrap $w={w}><Select aria-label={name} defaultValue={value}><option>{value}</option></Select><Caret /></SelectWrap>
);
const More = ({ name }: { name: string }) => <CaretButton aria-label={name}><Caret /></CaretButton>;

const DataRow = ({ r }: { r: RowData }) => {
  const vals = r.v ? r.v.split("|") : Array(15).fill("");
  const edge = r.kind !== "blank" && r.kind !== "above";
  const cell = (t: string, i: number) => (
    <Cell key={i} $kind={r.kind} $last={i === 9 || i === 14} $dash={t === "-"} $neg={t.length > 1 && t[0] === "-"}>{t}</Cell>
  );
  return (
    <Row $h={r.n === 27 ? 19 : 20}>
      <RowHead scope="row">{r.n}</RowHead>
      <Spacer />
      <Code>{r.code}</Code>
      <Label $bold={r.bold} $edge={edge}>{r.label}</Label>
      {vals.slice(0, 10).map((t, i) => cell(t, i))}
      <Spacer $edge={edge} />
      {vals.slice(10).map((t, i) => cell(t, i + 10))}
      <Spacer colSpan={5} />
    </Row>
  );
};

const Sheet = () => (
  <Grid>
    <colgroup>
      <col width={26} />
      {columns.map(([c, w]) => <col key={c} width={w} />)}
    </colgroup>
    <thead>
      <tr>
        <Corner aria-label="Alles selecteren"><Ico w={12} h={12}><path d="M12 0v12H0z" fill="#b4b4b4" stroke="none" /></Ico></Corner>
        {columns.map(([c]) => <ColHead key={c} scope="col" $sel={c === "A"}>{c}</ColHead>)}
      </tr>
    </thead>
    <tbody>
      <Row $h={24}><RowHead $drop={4} $sel>1</RowHead><Selected /><Spacer colSpan={23} /></Row>
      <Row $h={24}><RowHead $drop={4}>2</RowHead><Spacer colSpan={24} /></Row>
      <Row $h={24}><RowHead $drop={4}>3</RowHead><Spacer colSpan={24} /></Row>
      <Row $h={24}><RowHead $drop={4} $frozen>4</RowHead><Spacer colSpan={24} $frozen /></Row>
      <Row $h={20}><RowHead>5</RowHead><Spacer colSpan={24} /></Row>
      <Row $h={41}><RowHead $drop={8}>6</RowHead><Spacer /><Heading colSpan={23}>Balans en Winst- en Verliesrekening</Heading></Row>
      <Row $h={29}><RowHead $drop={4}>7</RowHead><Spacer /><SubHeading colSpan={23}>Loodgietersbedrijf De Looden Pijp (2017)</SubHeading></Row>
      {rows.map((r) => <DataRow key={r.n} r={r} />)}
    </tbody>
  </Grid>
);

export default function App() {
  return (
    <Window>
      <Global />
      <Header>
        <HeaderPattern />
        <TitleBar>
          <QuickAccess>
            <QuickButton aria-label="Opslaan"><Ico><path d="M1.500 1.500h12.500v13H1.500zM4 1.500v5h8v-5M5 14.500v-4h6v4" strokeWidth="2" /></Ico></QuickButton>
            <QuickButton $dim aria-label="Ongedaan maken"><Ico w={15}><path d="M5 2L1 6l4 4M1 6h8c5 0 5 7 0 8" strokeWidth="2" /></Ico><Caret c="#fff" /></QuickButton>
            <QuickButton $dim aria-label="Opnieuw"><Ico w={15}><path d="M10 2l4 4-4 4M14 6H6c-5 0-5 7 0 8" strokeWidth="2" /></Ico><Caret c="#fff" /></QuickButton>
            <QuickButton aria-label="Snel afdrukken"><Ico w={17}><path d="M5 13.500H1.500V.5H8l3 3V6M8 .5v4M3.500 3v8M7 12v-3h8v4h-1M9 9V6.500h4V9M9 12.500h4v3H9z" strokeWidth="1.500" /></Ico></QuickButton>
            <QuickButton aria-label="Afdrukvoorbeeld"><Ico w={15}><path d="M12.500 7V4L9 .5H1.500v14H9" strokeWidth="1.500" /><circle cx="8" cy="8" r="3.500" strokeWidth="1.500" /><path d="M10.500 10.500l4 4" strokeWidth="2.500" /></Ico></QuickButton>
            <QuickButton $dim aria-label="Plakken speciaal"><Ico w={17}><path d="M5 14.500H1.500v-12h11V8M4 2.500V1h6v2" strokeWidth="1.500" /><path d="M8 9v6M11 10c3-2 4 0 2 2l-2 2.500h5" /></Ico></QuickButton>
            <QuickButton aria-label="Werkbalk aanpassen"><Ico w={7} h={8}><path d="M0 1h7" strokeWidth="1.500" /><path d="M.5 4h6L3.500 7.500z" fill="#fff" stroke="none" /></Ico></QuickButton>
          </QuickAccess>
          <DocTitle>Boekhouden_in_Excel_v4.0_def_voorbeelden_038.xlsx  -  Excel</DocTitle>
          <WindowControls>
            <UserName>Stephan Zwanikken</UserName>
            <WindowButton aria-label="Lintopties"><Ico w={14} h={11}><path d="M.5.5h13v10H.5zM.5 2.500h13M7 9V4.500M5 6.500l2-2 2 2" /></Ico></WindowButton>
            <WindowButton aria-label="Minimaliseren"><Ico w={11} h={11}><path d="M0 5.500h11" /></Ico></WindowButton>
            <WindowButton aria-label="Verkleinen"><Ico w={11} h={11}><path d="M.5 3h7.500v7.500H.5zM3 3V.5h7.500V8H8" /></Ico></WindowButton>
            <WindowButton aria-label="Sluiten"><Ico w={11} h={11}><path d="M.5.5l10 10M10.500.5l-10 10" /></Ico></WindowButton>
          </WindowControls>
        </TitleBar>
        <TabRow>
          <RibbonTab $file>Bestand</RibbonTab>
          <RibbonTab $active>Start</RibbonTab>
          {ribbonTabs.map((t) => <RibbonTab key={t}>{t}</RibbonTab>)}
          <TellMe><Ico w={10} h={15}><path d="M3.500 10.500C3 8 .5 7.500.5 4.500a4.500 4 0 0 1 9 0C9.500 7.500 7 8 6.500 10.500zM3 12.500h4M3.500 14.500h3" /></Ico>Vertel wat u wilt doen</TellMe>
          <TabActions>
            <TabAction><Ico w={15} h={17}><circle cx="7" cy="5.500" r="4.500" /><path d="M.5 16c0-4 2-6 5-6M9 13h6M12 10v6" /></Ico>Delen</TabAction>
            <TabAction aria-label="Geschiedenis"><Ico w={17} h={17}><path d="M2 4a7.500 7.500 0 1 1-1 5M1.500 1v4h4M8.500 5v4l3 3" strokeWidth="1.300" /></Ico></TabAction>
          </TabActions>
        </TabRow>
      </Header>

      <Ribbon>
        <Group $w={224}>
          <GroupBody>
            <Big w={46} icon={<PasteIcon />} a="Plakken" />
            <Stack>
              <SmallButton><CutIcon />Knippen</SmallButton>
              <SmallButton $gap={6}><CopyIcon />Kopiëren<Caret /></SmallButton>
              <SmallButton><BrushIcon />Opmaak kopiëren/plakken</SmallButton>
            </Stack>
          </GroupBody>
          <Foot name="Klembord" />
        </Group>

        <Group $w={207}>
          <GroupBody>
            <TwoRows>
              <ToolRow>
                <Drop w={111} value="Gill Sans MT" name="Lettertype" />
                <Drop w={43} value="10" name="Tekengrootte" />
                <Tool aria-label="Groter"><Ico><path d="M1.500 15L6 4h.5L11 15M3 11.500h6.500" stroke="#555" strokeWidth="1.500" /><path d="M10 4.500h5L12.500 1z" fill="#3f7ab8" stroke="none" /></Ico></Tool>
                <Tool aria-label="Kleiner"><Ico><path d="M2.500 15L6 6h.5L10 15M4 12h5" stroke="#555" strokeWidth="1.500" /><path d="M10 1h5l-2.500 3.500z" fill="#3f7ab8" stroke="none" /></Ico></Tool>
              </ToolRow>
              <ToolRow>
                <Tool><b>B</b></Tool>
                <Tool><b><i>I</i></b></Tool>
                <Tool><b><u>U</u></b></Tool>
                <More name="Onderstreping" />
                <Divider />
                <Tool aria-label="Randen"><Ico><path d="M2.500 1v13M8.500 1v13M14.500 1v13M2 1.500h13M2 7.500h13" stroke="#777" strokeDasharray="1 1" /><path d="M1 14.500h14" stroke="#555" /></Ico></Tool>
                <More name="Randopties" />
                <Divider />
                <Tool aria-label="Opvulkleur"><Ico w={17} h={18}><path d="M3 7l5-5 5 5-5 6zM6 4V0" fill="#fff" stroke="#777" /><path d="M12 5c4 0 4 4 4 7-2-1-3-3-4-3z" fill="#3f7ab8" stroke="none" /><path d="M0 13h17v4H0z" fill="#ff0" stroke="none" /></Ico></Tool>
                <More name="Kleuren" />
                <Tool aria-label="Tekstkleur"><Ico w={17} h={18}><path d="M4 11L8 1h1l4 10M5.500 8h6" stroke="#666" strokeWidth="1.800" /><path d="M0 13h17v4H0z" fill="#f00" stroke="none" /></Ico></Tool>
                <More name="Tekstkleuren" />
              </ToolRow>
            </TwoRows>
          </GroupBody>
          <Foot name="Lettertype" />
        </Group>

        <Group $w={323}>
          <GroupBody>
            <TwoRows>
              <ToolRow>
                <Tool aria-label="Boven"><Lines d="M1 1.500h14M3 4.500h10M1 7.500h14" /></Tool>
                <Tool aria-label="Midden"><Lines d="M1 4.500h14M3 8.500h10M1 11.500h14" /></Tool>
                <Tool $on aria-label="Onder"><Lines d="M1 7.500h14M3 10.500h10M1 14.500h14" /></Tool>
                <Divider />
                <Tool aria-label="Afdrukstand"><Ico w={18}><circle cx="4" cy="9" r="2.300" stroke="#555" /><path d="M4 5l4 5M7 2l4 6M9.500 4.500c2-2 4 0 3 2s-2 1-3 0M7 15l9-9M13 6h3.500v3" stroke="#555" /></Ico></Tool>
                <More name="Richting" />
              </ToolRow>
              <ToolRow>
                <Tool aria-label="Links"><Lines d="M1 2.500h14M1 5.500h9M1 8.500h14M1 12.500h9" /></Tool>
                <Tool aria-label="Centreren"><Lines d="M1 2.500h14M3 5.500h10M1 8.500h14M3 12.500h10" /></Tool>
                <Tool aria-label="Rechts"><Lines d="M1 2.500h14M6 5.500h9M1 8.500h14M6 12.500h9" /></Tool>
                <Divider />
                <Tool aria-label="Inspringing kleiner"><Ico><path d="M0 2.500h16M9 5.500h7M9 8.500h7M0 12.500h16" stroke="#666" /><path d="M0 7h7M3.500 4L.8 7l2.700 3" stroke="#3f7ab8" strokeWidth="2" /></Ico></Tool>
                <Tool aria-label="Inspringing groter"><Ico><path d="M0 2.500h16M9 5.500h7M9 8.500h7M0 12.500h16" stroke="#666" /><path d="M0 7h7M4 4l2.700 3L4 10" stroke="#3f7ab8" strokeWidth="2" /></Ico></Tool>
              </ToolRow>
            </TwoRows>
            <Divider $tall />
            <TwoRows>
              <SmallButton><Ico><path d="M.5 0v16M3 2.500h10M.5 6.500H7M.5 10.500H7M3 14.500h8M.5.5h5" stroke="#666" /><path d="M8 6.500h7v4H9M11.500 8L9 10.500l2.500 2.500" stroke="#3f7ab8" strokeWidth="1.500" /></Ico>Tekstterugloop</SmallButton>
              <SmallButton $off $gap={8}><Ico><path d="M.5 1.500h14v13H.5zM.5 4.500h14M.5 11.500h14M7.500 1.500v3M7.500 11.500v3M3 8h9M5 6L3 8l2 2M10 6l2 2-2 2" stroke="#a9a5a9" /></Ico>Samenvoegen en centreren<Caret c="#b0b0b0" /></SmallButton>
            </TwoRows>
          </GroupBody>
          <Foot name="Uitlijning" />
        </Group>

        <Group $w={140}>
          <GroupBody>
            <TwoRows>
              <ToolRow><Drop w={131} value="Standaard" name="Getalnotatie" /></ToolRow>
              <ToolRow>
                <Tool aria-label="Valuta"><Ico w={18}><path d="M1 1.500h15v8H1z" fill="#fff" stroke="#3f7ab8" strokeWidth="2" /><circle cx="7" cy="5.500" r="2" fill="#3f7ab8" stroke="none" /><path d="M10 7h7v3h-7zM11 10.500h7v2h-7zM5 12h7v3H5z" fill="#eac47d" stroke="#f1f1f1" strokeWidth=".5" /></Ico></Tool>
                <More name="Valuta kiezen" />
                <Tool><b>%</b></Tool>
                <Tool aria-label="Duizendtallen"><Ico w={16} h={10}><ellipse cx="2.500" cy="5" rx="1.700" ry="3.500" stroke="#444" /><ellipse cx="8" cy="5" rx="1.700" ry="3.500" stroke="#444" /><ellipse cx="13.500" cy="5" rx="1.700" ry="3.500" stroke="#444" /></Ico></Tool>
                <Divider />
                <Tool aria-label="Meer decimalen"><Ico><path d="M1 4h6M3.500 1.500L1 4l2.500 2.500" stroke="#3f7ab8" strokeWidth="1.500" /><ellipse cx="12.500" cy="3.500" rx="1.600" ry="2.800" stroke="#555" /><ellipse cx="7" cy="11.500" rx="1.600" ry="2.800" stroke="#555" /><ellipse cx="12.500" cy="11.500" rx="1.600" ry="2.800" stroke="#555" /><path d="M3 14l-1 2M9.500 6L9 7.500" stroke="#555" /></Ico></Tool>
                <Tool aria-label="Minder decimalen"><Ico><path d="M0 12h6M3.500 9.500L6 12l-2.500 2.500" stroke="#3f7ab8" strokeWidth="1.500" /><ellipse cx="7" cy="3.500" rx="1.600" ry="2.800" stroke="#555" /><ellipse cx="12.500" cy="3.500" rx="1.600" ry="2.800" stroke="#555" /><ellipse cx="12.500" cy="11.500" rx="1.600" ry="2.800" stroke="#555" /><path d="M3 6l-1 2M9 14l-1 2" stroke="#555" /></Ico></Tool>
              </ToolRow>
            </TwoRows>
          </GroupBody>
          <Foot name="Getal" />
        </Group>

        <Group $w={493}>
          <GroupBody>
            <Big w={88} icon={<CondIcon />} a="Voorwaardelijke" b="opmaak" />
            <Big w={56} icon={<TableIcon />} a="Opmaken" b="als tabel" />
            <Gallery>
              <GalleryGrid>
                <StyleCell>Komma 2</StyleCell>
                <StyleCell>Standaard 2</StyleCell>
                <StyleCell $sel>Standaard</StyleCell>
                <StyleCell $bg="#c6efce" $fg="#1d6b23">Goed</StyleCell>
                <StyleCell $bg="#ffeb9c" $fg="#9c5700">Neutraal</StyleCell>
                <StyleCell $bg="#ffc7ce" $fg="#9c0006">Ongeldig</StyleCell>
              </GalleryGrid>
              <GalleryScroll>
                <ScrollStep $off aria-label="Omhoog"><Caret up c="#b0b0b0" /></ScrollStep>
                <ScrollStep aria-label="Omlaag"><Caret /></ScrollStep>
                <ScrollStep aria-label="Alle stijlen"><Ico w={8} h={8}><path d="M0 1h8" stroke="#666" /><path d="M1 4h6L4 7.500z" fill="#666" stroke="none" /></Ico></ScrollStep>
              </GalleryScroll>
            </Gallery>
          </GroupBody>
          <Foot name="Stijlen" open={false} />
        </Group>

        <Group $w={179}>
          <GroupBody>
            <Big w={54} icon={<InsertIcon />} a="Invoegen" />
            <Big w={66} icon={<DeleteIcon />} a="Verwijderen" />
            <Big w={50} icon={<FormatIcon />} a="Opmaak" />
          </GroupBody>
          <Foot name="Cellen" open={false} />
        </Group>

        <Group $w={239}>
          <GroupBody>
            <Stack $w={98}>
              <SmallButton $off $gap={8}><Ico><path d="M14 5V2H2l6 6-6 6h12v-3" stroke="#a5a5a5" strokeWidth="2" /></Ico>AutoSom<Caret /></SmallButton>
              <SmallButton><Ico><path d="M1.500 1.500h13v13h-13z" fill="#fff" stroke="#777" /><path d="M1 1h14v3H1z" fill="#777" stroke="none" /><path d="M8 5v8M5 10l3 3 3-3" stroke="#3f7ab8" strokeWidth="2" /></Ico>Doorvoeren<Caret /></SmallButton>
              <SmallButton><Ico><path d="M6 7l6-6 2 4-5 6z" fill="#e57f90" stroke="none" /><path d="M1 11l4-3 4 3-4 4z" fill="#e9909f" stroke="none" /></Ico>Wissen<Caret /></SmallButton>
            </Stack>
            <Big w={66} off icon={<SortIcon />} a="Sorteren en" b="filteren" />
            <Big w={66} icon={<FindIcon />} a="Zoeken en" b="selecteren" />
          </GroupBody>
          <Foot name="Bewerken" open={false} />
        </Group>
        <RibbonEnd><button aria-label="Lint samenvouwen"><Ico w={10} h={7}><path d="M1 6l4-4 4 4" stroke="#666" strokeWidth="2" /></Ico></button></RibbonEnd>
      </Ribbon>

      <FormulaBar>
        <Box $w={229}><BoxInput aria-label="Naamvak" defaultValue="A1" /><Caret /></Box>
        <Grip><i /><i /><i /></Grip>
        <FxButtons>
          <FxButton aria-label="Annuleren"><Ico w={12} h={12}><path d="M1 1l10 10M11 1L1 11" stroke="#c0c0c0" strokeWidth="1.500" /></Ico></FxButton>
          <FxButton aria-label="Invoeren"><Ico w={13} h={12}><path d="M1 7l4 4 7-10" stroke="#c0c0c0" strokeWidth="2" /></Ico></FxButton>
          <FxButton aria-label="Functie invoegen">fx</FxButton>
        </FxButtons>
        <Box><BoxInput aria-label="Formule" /><Ico w={8} h={6}><path d="M1 1l3 3 3-3" stroke="#666" strokeWidth="2" /></Ico></Box>
      </FormulaBar>

      <Workspace>
        <Pane>
          <Sheet />
          <NavPanel>
            <Logo />
            <HomeLink href="#home" aria-label="Home"><HomeIcon /></HomeLink>
            <NavCards>
              {cards.map(([a, b, bg, fg]) => (
                <NavCard key={a} $bg={bg} $fg={fg}><a href={`#${a}`}>{a}</a><a href={`#${b}`}>{b}</a></NavCard>
              ))}
            </NavCards>
          </NavPanel>
          <Note>
            <h2>Toelichting</h2>
            <p><b>Let op.</b> Hier staan alle bedragen als<br />Debet (+) en Credit (-) bedragen<br />vermeld. Winst wordt dus negatief<br />weergegeven. NB. De winst is nog niet bij<br />het eigen vermogen opgeteld.</p>
            <p>U ziet per dagboek en kwartaal wat er<br />geboekt wordt per regel.</p>
            <p>De balanscontrole toont aan of er een<br />verschil is tussen de Activa en Passiva +<br />Resultaat lopend boekjaar. Deze moet<br />nul zijn. Het verschil in de balans (activa -<br />passiva) moet gelijk zijn aan het resultaat<br />dus.</p>
          </Note>
        </Pane>
        <PaneEdge />
        <VScroll>
          <Arrow aria-label="Omhoog"><Caret up /></Arrow>
          <VTrack><VThumb /></VTrack>
          <Arrow aria-label="Omlaag"><Caret /></Arrow>
        </VScroll>
        <Tooltip role="tooltip">https://essetfinancialservices-my.sharepoint.com/personal/szwanikken_essetfinancialservices_onmicrosoft_com/Documents/Boekhouden in Excel/4.0/Boekhouden_in_Excel_v4.0_def_voorbeelden_038.xlsx - 'Balans en W&V'!A1</Tooltip>
      </Workspace>

      <SheetBar>
        <SheetNav aria-label="Vorige"><Ico w={5} h={8}><path d="M5 0v8L0 4z" fill={green} stroke="none" /></Ico></SheetNav>
        <SheetNav aria-label="Volgende"><Ico w={5} h={8}><path d="M0 0v8l5-4z" fill={green} stroke="none" /></Ico></SheetNav>
        <SheetNav>...</SheetNav>
        <SheetTabs>
          {leftTabs.map(([name, bg, fg, pad]) => (
            <Fragment key={name}>
              <TabRule />
              <SheetTab $bg={bg} $fg={fg} $pad={pad}>{name}</SheetTab>
            </Fragment>
          ))}
          <ActiveTab>Balans en W&V</ActiveTab>
          <SheetTab $bg="#9bbb59" $fg="#222" $pad={13}>Klassieke balans en W&V</SheetTab>
          <TabRule />
          <SheetTab $bg="#9bbb59" $fg="#222" $pad={9} $cut>Dashboard</SheetTab>
        </SheetTabs>
        <SheetNav>...</SheetNav>
        <AddSheet aria-label="Nieuw blad"><Ico w={17} h={17}><circle cx="8.500" cy="8.500" r="7.500" stroke="#888" /><path d="M8.500 5v7M5 8.500h7" stroke="#666" strokeWidth="2" /></Ico></AddSheet>
        <Grip><i /><i /><i /></Grip>
        <HScroll>
          <Arrow aria-label="Links"><Ico w={5} h={8}><path d="M5 0v8L0 4z" fill="#666" stroke="none" /></Ico></Arrow>
          <HThumb />
          <Arrow aria-label="Rechts"><Ico w={5} h={8}><path d="M0 0v8l5-4z" fill="#666" stroke="none" /></Ico></Arrow>
        </HScroll>
      </SheetBar>

      <StatusBar>
        Gereed
        <MacroButton aria-label="Macro opnemen"><Ico w={14} h={14}><path d="M3.500 3.500h10v10h-12v-6" stroke="#666" /><circle cx="3.500" cy="3.500" r="3" fill="#666" stroke="none" /><path d="M7 3.500h7" stroke="#666" strokeWidth="3" /><path d="M4 8h2M7 8h2M10 8h2M4 11h2M7 11h2M10 11h2" stroke="#666" strokeWidth="1.500" /></Ico></MacroButton>
        <Views>
          <ViewButton $on aria-label="Normaal"><Ico w={14} h={13}><path d="M.5.5h13v12H.5zM.5 4.500h13M.5 8.500h13M5 .5v12M9.500.5v12" stroke="#666" /></Ico></ViewButton>
          <ViewButton aria-label="Pagina-indeling"><Ico w={14} h={13}><path d="M.5.5h13v12H.5zM3.500 2.500h7v8h-7zM5 4.500h4M5 6.500h4M5 8.500h4" stroke="#666" /></Ico></ViewButton>
          <ViewButton aria-label="Pagina-eindevoorbeeld"><Ico w={14} h={13}><path d="M.5.5h13v12H.5zM.5 7.500h8v-7M4.500 .5v7" stroke="#666" /></Ico></ViewButton>
        </Views>
        <ZoomStep aria-label="Uitzoomen">−</ZoomStep>
        <Zoom type="range" aria-label="Zoomen" min={0} max={200} defaultValue={100} />
        <ZoomStep aria-label="Inzoomen">+</ZoomStep>
        <ZoomValue>100%</ZoomValue>
      </StatusBar>
    </Window>
  );
}
